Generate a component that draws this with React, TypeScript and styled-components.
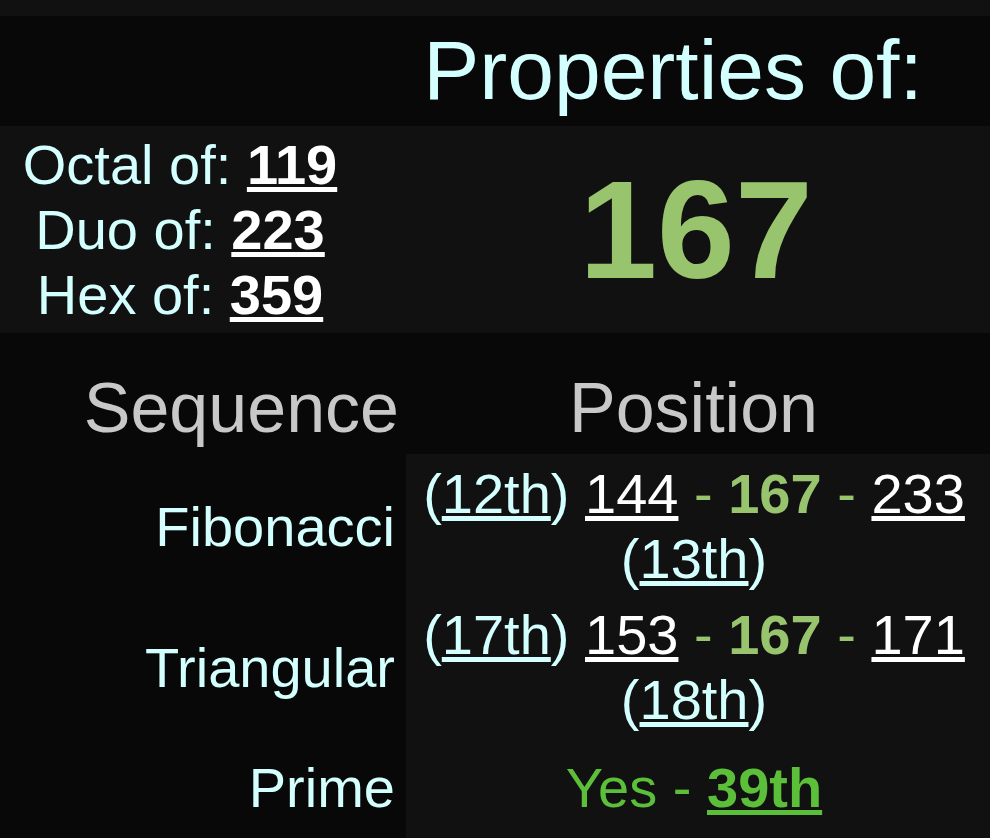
import styled, { createGlobalStyle } from "styled-components"

const GlobalStyle = createGlobalStyle`
  body {
    margin: 0;
    background: #111111;
    font-family: "Liberation Sans", Arial, sans-serif;
  }
`

const CYAN = "#d4ffff"
const GREEN = "#98c46e"

type Step = { ord: string; prev: string; next: string; nextOrd: string }

const sequences: { name: string; step: Step }[] = [
  { name: "Fibonacci", step: { ord: "12th", prev: "144", next: "233", nextOrd: "13th" } },
  { name: "Triangular", step: { ord: "17th", prev: "153", next: "171", nextOrd: "18th" } },
]

export default function App() {
  return (
    <>
      <GlobalStyle />
      <Page>
        <HeaderRow>
          <span />
          <Title>Properties of:</Title>
        </HeaderRow>

        <SummaryRow>
          <Bases>
            <BaseLine>
              Octal of: <BoldLink href="#">119</BoldLink>
            </BaseLine>
            <BaseLine>
              Duo of: <BoldLink href="#">223</BoldLink>
            </BaseLine>
            <BaseLine>
              Hex of: <BoldLink href="#">359</BoldLink>
            </BaseLine>
          </Bases>
          <BigNumber>167</BigNumber>
        </SummaryRow>

        <HeadRow>
          <ColHead $align="right">Sequence</ColHead>
          <ColHead $align="center">Position</ColHead>
        </HeadRow>

        {sequences.map(({ name, step }) => (
          <DataRow key={name}>
            <Label $top={7} $bottom={4}>{name}</Label>
            <Value $top={7} $bottom={4}>
              (<OrdLink href="#">{step.ord}</OrdLink>){" "}
              <NumLink href="#">{step.prev}</NumLink> <Dash>-</Dash>{" "}
              <Current>167</Current> <Dash>-</Dash>{" "}
              <NumLink href="#">{step.next}</NumLink> (
              <OrdLink href="#">{step.nextOrd}</OrdLink>)
            </Value>
          </DataRow>
        ))}

        <DataRow>
          <Label $top={19} $bottom={22}>Prime</Label>
          <Value $top={19} $bottom={22}>
            <PrimeText>
              Yes - <PrimeLink href="#">39th</PrimeLink>
            </PrimeText>
          </Value>
        </DataRow>
      </Page>
    </>
  )
}

const Page = styled.main`
  padding-top: 16px;
  width: 990px;
  min-height: 822px;
  background: #111111;
`

const Row = styled.div`
  display: grid;
  grid-template-columns: 406px 1fr;
`

const HeaderRow = styled(Row)`
  background: #080808;
  padding: 6px 0 7px;
`

const Title = styled.h1`
  margin: 0;
  padding-right: 50px;
  font-size: 84px;
  font-weight: 400;
  line-height: normal;
  text-align: center;
  color: ${CYAN};
`

const SummaryRow = styled(Row)`
  background: #111111;
  align-items: center;
  padding: 6px 0 6px;
`

const Bases = styled.div`
  padding-right: 46px;
  text-align: center;
  color: ${CYAN};
  font-size: 56px;
`

const BaseLine = styled.div`
  line-height: normal;
`

const BoldLink = styled.a`
  color: #ffffff;
  font-weight: 700;
  text-decoration: underline;
`

const BigNumber = styled.div`
  padding-right: 4px;
  text-align: center;
  font-size: 140px;
  font-weight: 700;
  color: ${GREEN};
  line-height: normal;
`

const HeadRow = styled(Row)`
  background: #080808;
  padding: 35px 0 6px;
`

const ColHead = styled.div<{ $align: "right" | "center" }>`
  padding: 0 ${(p) => (p.$align === "center" ? 16 : 7)}px 0 7px;
  font-size: 70px;
  line-height: normal;
  color: #c8c8c8;
  text-align: ${(p) => p.$align};
`

const DataRow = styled(Row)`
  align-items: stretch;
`

const Label = styled.div<{ $top: number; $bottom: number }>`
  display: flex;
  align-items: center;
  justify-content: flex-end;
  padding: ${(p) => p.$top}px 11px ${(p) => p.$bottom}px;
  background: #080808;
  font-size: 56px;
  line-height: normal;
  color: ${CYAN};
`

const Value = styled.div<{ $top: number; $bottom: number }>`
  padding: ${(p) => p.$top}px 12px ${(p) => p.$bottom}px 4px;
  background: #111111;
  font-size: 56px;
  line-height: normal;
  text-align: center;
  color: ${CYAN};
`

const OrdLink = styled.a`
  color: ${CYAN};
  text-decoration: underline;
`

const NumLink = styled.a`
  color: #ffffff;
  text-decoration: underline;
`

const Dash = styled.span`
  color: ${GREEN};
`

const Current = styled.b`
  color: ${GREEN};
`

const PrimeText = styled.span`
  color: #5cbf3a;
`

const PrimeLink = styled.a`
  color: #5cbf3a;
  font-weight: 700;
  text-decoration: underline;
`
